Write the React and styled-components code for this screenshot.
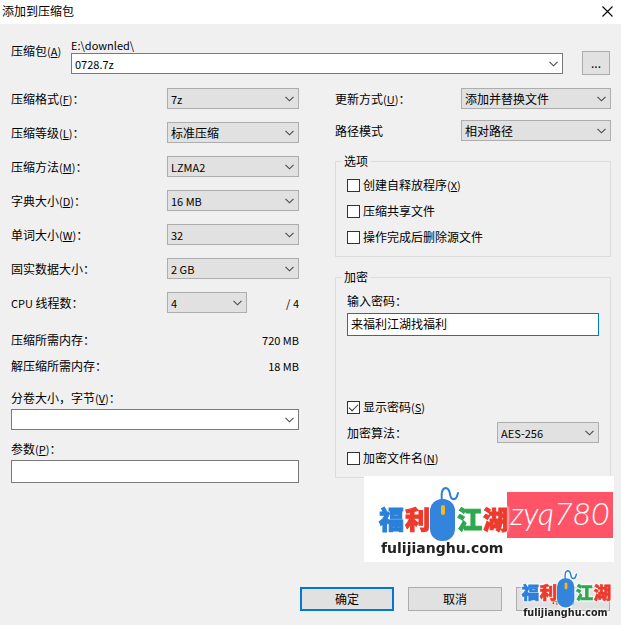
import React, { useState } from "react";
import styled, { createGlobalStyle, css } from "styled-components";

const levels = [
    { id: "format", label: "压缩格式", hotkey: "F", value: "7z", latin: true },
    { id: "level", label: "压缩等级", hotkey: "L", value: "标准压缩" },
    { id: "method", label: "压缩方法", hotkey: "M", value: "LZMA2", latin: true },
    { id: "dictionary", label: "字典大小", hotkey: "D", value: "16 MB", latin: true },
    { id: "word", label: "单词大小", hotkey: "W", value: "32", latin: true },
    { id: "solid", label: "固实数据大小", value: "2 GB", latin: true },
];

const Hotkey = ({ letter }) => <Latin>(<u>{letter}</u>)</Latin>;

const Combo = ({ id, value, label, ...rest }) => (
    <ComboBox {...rest}>
        <select id={id} aria-label={label} defaultValue={value}>
            <option value={value}>{value}</option>
        </select>
        <svg width="9" height="6" viewBox="0 0 9 6" aria-hidden="true">
            <path d="M0.5 0.8 L4.5 4.8 L8.5 0.8" fill="none" stroke="#484848" strokeWidth="1.1" />
        </svg>
    </ComboBox>
);

const Check = ({ label, hotkey, ...rest }) => (
    <CheckLabel>
        <input type="checkbox" {...rest} />
        <span>{label}{hotkey && <Hotkey letter={hotkey} />}</span>
    </CheckLabel>
);

const Logo = ({ width }) => (
    <LogoSvg width={width} viewBox="0 0 136 78" role="img" aria-label="福利江湖 fulijianghu.com">
        <g className="name">
            <text x="4" y="45" fill="#2b7fd9" stroke="#2b7fd9">福</text>
            <text x="30" y="45" fill="#ee3a2d" stroke="#ee3a2d">利</text>
            <text x="82" y="45" fill="#2da84f" stroke="#2da84f">江</text>
            <text x="108" y="45" fill="#ee3a2d" stroke="#ee3a2d">湖</text>
        </g>
        <path d="M67 17 C66 9 67 4 71 4 C77 5 73 14 78 15 C82 16 82 12 83 9" fill="none" stroke="#2b7fd9" strokeWidth="2" strokeLinecap="round" />
        <rect x="55" y="15" width="25" height="42" rx="12" fill="#3284dc" />
        <rect x="66" y="21" width="4" height="10" rx="2" fill="#f6b81c" />
        <text className="site" x="6" y="69">fulijianghu.com</text>
    </LogoSvg>
);

const App = () => {
    const [password, setPassword] = useState("来福利江湖找福利");
    const [visible, setVisible] = useState(true);

    return (
        <Dialog onSubmit={(e) => e.preventDefault()}>
            <GlobalStyle />
            <TitleBar>
                <h1>添加到压缩包</h1>
                <button type="button" aria-label="关闭">
                    <svg width="11" height="11" viewBox="0 0 11 11">
                        <path d="M0.5 0.5 L10.5 10.5 M10.5 0.5 L0.5 10.5" stroke="#000" strokeWidth="1.1" />
                    </svg>
                </button>
            </TitleBar>

            <Archive>
                <label htmlFor="archive">压缩包<Hotkey letter="A" /></label>
                <div className="path">
                    <Latin>E:\downled\</Latin>
                    <Combo id="archive" value="0728.7z" $latin $editable />
                </div>
                <Button type="button" $small aria-label="浏览">...</Button>
            </Archive>

            <Columns>
                <div>
                    <Rows>
                        {levels.map((item) => (
                            <Row key={item.id}>
                                <label htmlFor={item.id}>{item.label}{item.hotkey && <Hotkey letter={item.hotkey} />}：</label>
                                <Combo id={item.id} value={item.value} $latin={item.latin} $width="132px" />
                            </Row>
                        ))}
                        <Row>
                            <label htmlFor="threads"><Latin>CPU </Latin>线程数：</label>
                            <Threads>
                                <Combo id="threads" value="4" $latin $width="80px" />
                                <Latin>/ 4</Latin>
                            </Threads>
                        </Row>
                    </Rows>
                    <Memory>
                        <Row><span>压缩所需内存：</span><Latin>720 MB</Latin></Row>
                        <Row><span>解压缩所需内存：</span><Latin>18 MB</Latin></Row>
                    </Memory>
                    <Field>
                        <label htmlFor="volume">分卷大小，字节<Hotkey letter="V" />：</label>
                        <Combo id="volume" value="" $editable />
                    </Field>
                    <Field>
                        <label htmlFor="params">参数<Hotkey letter="P" />：</label>
                        <TextBox id="params" type="text" />
                    </Field>
                </div>

                <div>
                    <Rows $tight>
                        <Row>
                            <label htmlFor="update">更新方式<Hotkey letter="U" />：</label>
                            <Combo id="update" value="添加并替换文件" $width="150px" />
                        </Row>
                        <Row>
                            <label htmlFor="paths">路径模式</label>
                            <Combo id="paths" value="相对路径" $width="150px" />
                        </Row>
                    </Rows>
                    <Group>
                        <legend>选项</legend>
                        <Checks>
                            <Check label="创建自释放程序" hotkey="X" />
                            <Check label="压缩共享文件" />
                            <Check label="操作完成后删除源文件" />
                        </Checks>
                    </Group>
                    <Group>
                        <legend>加密</legend>
                        <Password>
                            <label htmlFor="password">输入密码：</label>
                            <TextBox
                                id="password"
                                type={visible ? "text" : "password"}
                                value={password}
                                onChange={(e) => setPassword(e.target.value)}
                                $active
                                autoFocus
                            />
                        </Password>
                        <Encryption>
                            <Check label="显示密码" hotkey="S" checked={visible} onChange={(e) => setVisible(e.target.checked)} />
                            <Row>
                                <label htmlFor="cipher">加密算法：</label>
                                <Combo id="cipher" value="AES-256" $latin $width="102px" />
                            </Row>
                            <Check label="加密文件名" hotkey="N" />
                        </Encryption>
                    </Group>
                </div>
            </Columns>

            <Footer>
                <Button type="submit" $primary>确定</Button>
                <Button type="button">取消</Button>
                <Button type="button">帮助</Button>
                <Banner>
                    <Logo width="136" />
                    <Tag>zyq780</Tag>
                </Banner>
                <Stamp><Logo width="94" /></Stamp>
            </Footer>
        </Dialog>
    );
};

const GlobalStyle = createGlobalStyle`
    * {
        box-sizing: border-box;
    }

    body {
        margin: 0;
        background: #f0f0f0;
    }

    body, input, select, button {
        font-family: "Noto Sans CJK SC", sans-serif;
        font-size: 12px;
        line-height: 16px;
        color: #000;
    }
`;

const Latin = styled.span`
    font-size: 11px;
    white-space: pre;
`;

const Dialog = styled.form`
    display: flex;
    flex-direction: column;
    min-height: 100vh;
`;

const TitleBar = styled.header`
    display: flex;
    align-items: center;
    justify-content: space-between;
    height: 24px;
    padding: 0 8px 2px 2px;
    background: #fff;

    h1 {
        margin: 0;
        font-size: 12px;
        font-weight: 400;
    }

    button {
        display: flex;
        padding: 0;
        border: 0;
        background: none;
    }
`;

const Archive = styled.div`
    display: flex;
    align-items: flex-end;
    padding: 13px 11px 13px;

    > label {
        flex: 0 0 60px;
        margin-bottom: 16px;
    }

    .path {
        display: flex;
        flex-direction: column;
        flex: 1;
        margin: 0 19px 1px 0;
    }
`;

const ComboBox = styled.div`
    position: relative;
    width: ${(p) => p.$width || "100%"};

    select {
        display: block;
        width: 100%;
        height: 21px;
        padding: 0 18px 0 3px;
        border: 1px solid ${(p) => (p.$editable ? "#7a7a7a" : "#adadad")};
        border-radius: 0;
        outline: 0;
        appearance: none;
        background: ${(p) => (p.$editable ? "#fff" : "#e1e1e1")};
        ${(p) => p.$latin && css`font-size: 11px;`}
    }

    svg {
        position: absolute;
        top: 8px;
        right: 5px;
        pointer-events: none;
    }
`;

const Button = styled.button`
    width: ${(p) => (p.$small ? "28px" : "94px")};
    height: 24px;
    padding: 0;
    border: ${(p) => (p.$primary ? "2px solid #0078d7" : "1px solid #adadad")};
    background: #e1e1e1;
`;

const Columns = styled.main`
    display: grid;
    grid-template-columns: 288fr 276fr;
    gap: 36px;
    padding: 0 10px 0 11px;
`;

const Rows = styled.div`
    display: flex;
    flex-direction: column;
    gap: ${(p) => (p.$tight ? "11px" : "13px")};
`;

const Row = styled.div`
    display: flex;
    align-items: center;
    justify-content: space-between;
    min-height: 21px;
`;

const Threads = styled.div`
    display: flex;
    align-items: center;
    justify-content: space-between;
    width: 132px;
`;

const Memory = styled.div`
    display: flex;
    flex-direction: column;
    gap: 5px;
    margin: 16px 0 14px;
`;

const Field = styled.div`
    display: flex;
    flex-direction: column;
    gap: 3px;

    & + & {
        margin-top: 11px;
    }
`;

const TextBox = styled.input`
    width: 100%;
    height: 23px;
    padding: 0 3px 2px;
    border: 1px solid ${(p) => (p.$active ? "#0078d7" : "#7a7a7a")};
    outline: 0;
    background: #fff;
`;

const Group = styled.fieldset`
    min-width: 0;
    margin: 12px 0 0;
    padding: 8px 11px 11px;
    border: 1px solid #dcdcdc;

    legend {
        margin-left: -5px;
        padding: 0 2px;
    }
`;

const Checks = styled.div`
    display: flex;
    flex-direction: column;
    gap: 10px;
`;

const CheckLabel = styled.label`
    display: flex;
    align-items: center;
    gap: 3px;

    input {
        appearance: none;
        width: 13px;
        height: 13px;
        margin: 0;
        border: 1px solid #333;
        background: #fff;
    }

    input:checked::before {
        content: "";
        display: block;
        width: 8px;
        height: 4px;
        margin: 2px 0 0 1px;
        border: solid #333;
        border-width: 0 0 1px 1px;
        transform: rotate(-45deg);
    }
`;

const Password = styled.div`
    display: flex;
    flex-direction: column;
    gap: 4px;
`;

const Encryption = styled.div`
    display: flex;
    flex-direction: column;
    gap: 7px;
    margin-top: 63px;
`;

const Footer = styled.footer`
    position: relative;
    display: flex;
    justify-content: flex-end;
    gap: 14px;
    margin-top: auto;
    padding: 24px 11px 14px;
`;

const Banner = styled.div`
    position: absolute;
    right: 7px;
    bottom: 63px;
    display: flex;
    align-items: flex-start;
    justify-content: flex-end;
    width: 250px;
    height: 86px;
    padding: 8px 1px 0 0;
    background: #fff;
`;

const Tag = styled.div`
    width: 106px;
    height: 46px;
    margin-top: 8px;
    margin-left: -4px;
    background: #ff5468;
    color: #fff;
    font: italic 300 32px/42px Lato, sans-serif;
    text-align: center;
`;

const Stamp = styled.div`
    position: absolute;
    right: 8px;
    bottom: 3px;
`;

const LogoSvg = styled.svg`
    display: block;
    flex: none;
    filter: drop-shadow(0 0 1px #fff) drop-shadow(0 0 1px #fff);

    .name {
        font: 900 25px "Noto Sans CJK SC", sans-serif;
        stroke-width: 1px;
    }

    .site {
        fill: #222;
        font: 700 14px "DejaVu Sans", sans-serif;
    }
`;

export default App;
